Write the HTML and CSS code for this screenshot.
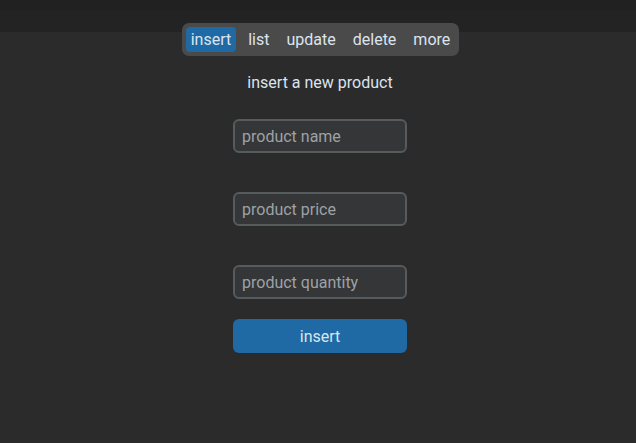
FILE: index.html
```html
<!DOCTYPE html>
<html>
<head>
<meta charset="utf-8">
<link rel="stylesheet" href="styles.css">
</head>
<body>
<div class="page">
  <nav class="tabs">
    <button class="tab active">insert</button>
    <button class="tab">list</button>
    <button class="tab">update</button>
    <button class="tab">delete</button>
    <button class="tab">more</button>
  </nav>
  <div class="title">insert a new product</div>
  <form class="form">
    <input class="field" type="text" placeholder="product name">
    <input class="field" type="text" placeholder="product price">
    <input class="field" type="text" placeholder="product quantity">
    <button class="submit" type="button">insert</button>
  </form>
</div>
</body>
</html>
```
FILE: styles.css
```css
html, body {
  margin: 0;
  height: 100%;
}
body {
  background: linear-gradient(to bottom, #212121 0, #212121 10px, #232323 10px, #232323 32px, #2b2b2b 32px);
  font-family: Roboto, "Liberation Sans", sans-serif;
  font-size: 16px;
  color: #dce4ee;
}
.page {
  display: flex;
  flex-direction: column;
  align-items: center;
  padding-top: 23px;
  padding-left: 4px;
}
.tabs {
  display: flex;
  gap: 7px;
  padding: 4px;
  background: #4a4a4a;
  border-radius: 7px;
  margin-left: 1px;
}
.tab {
  font: inherit;
  color: #dce4ee;
  background: transparent;
  border: 0;
  border-radius: 4px;
  height: 25px;
  padding: 0 5px;
  line-height: 25px;
  cursor: pointer;
}
.tab.active {
  background: #1f6aa5;
}
.title {
  margin-top: 17px;
  line-height: 20px;
  height: 20px;
}
.form {
  display: flex;
  flex-direction: column;
  align-items: center;
  margin-top: 26px;
  gap: 39px;
}
.field {
  box-sizing: border-box;
  width: 174px;
  height: 34px;
  border: 2px solid #565b5e;
  border-radius: 6px;
  background: #343638;
  color: #dce4ee;
  font: inherit;
  padding: 0 7px;
  outline: none;
}
.field::placeholder {
  color: #9ea2a6;
}
.submit {
  width: 174px;
  height: 34px;
  margin-top: -19px;
  border: 0;
  border-radius: 6px;
  background: #1f6aa5;
  color: #dce4ee;
  font: inherit;
  cursor: pointer;
}
```
